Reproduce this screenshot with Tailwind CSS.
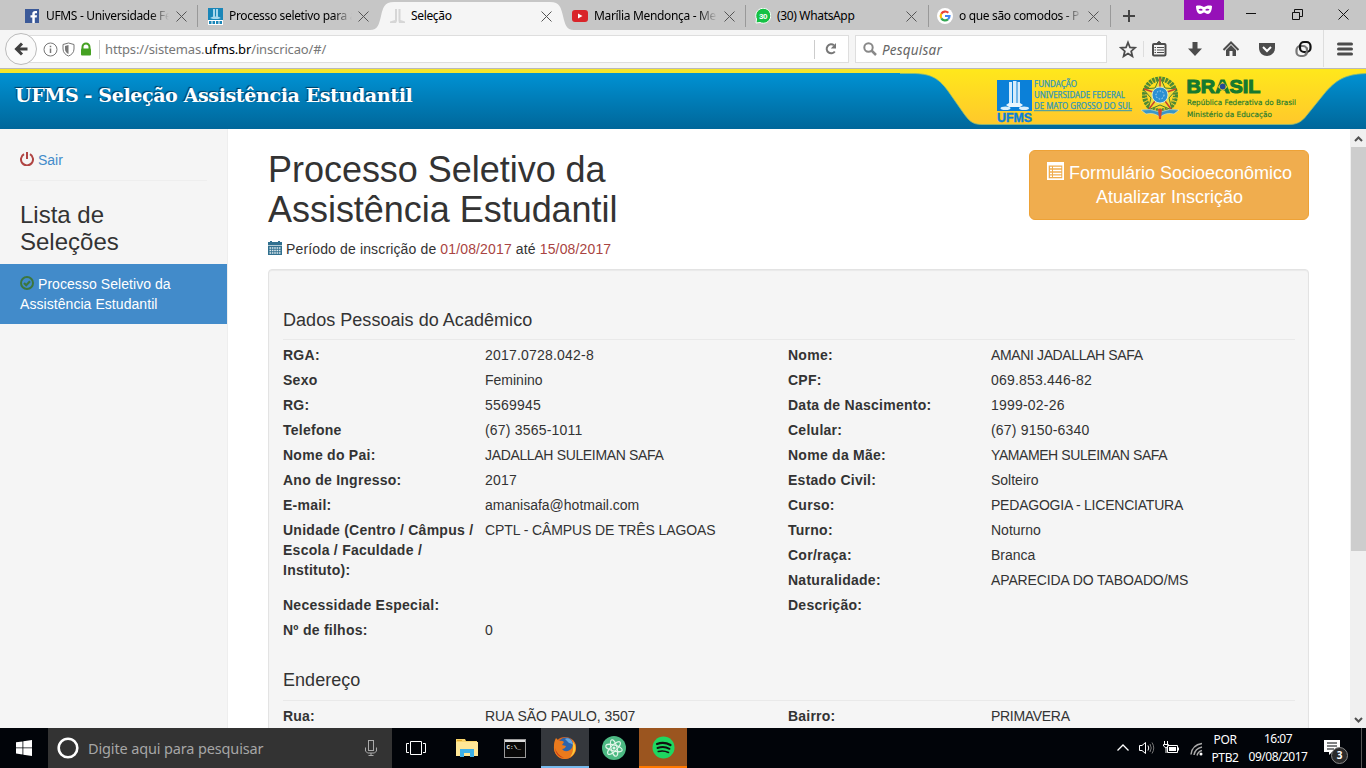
<!DOCTYPE html>
<html lang="pt-BR">
<head>
<meta charset="utf-8">
<title>Seleção</title>
<script src="https://cdn.jsdelivr.net/npm/@tailwindcss/browser@4"></script>
</head>
<body class="w-[1366px] h-[768px] overflow-hidden flex flex-col bg-white font-['Liberation_Sans',sans-serif] text-[14px] leading-5 text-[#333]">

<!-- Tab strip -->
<div class="relative h-[30px] shrink-0 bg-[#c6c6c6] flex pl-[14px] font-['Noto_Sans',sans-serif] text-[12px] tracking-[-0.34px] text-black">
  <svg class="absolute left-[370px] top-0" width="204" height="30"><path d="M0 30C8 30 9 24 11 16C13 8 14 2 24 2H180C190 2 191 8 193 16C195 24 196 30 204 30Z" fill="#f5f5f5"/></svg>
  <div class="relative w-[183px] flex items-center pl-[11px] pt-[2px]">
    <svg class="shrink-0" width="14" height="14" viewBox="0 0 14 14"><rect width="14" height="14" fill="#3b5998"/><path d="M7.300 14V8.500H5.500V6.200H7.300V4.800C7.300 2.800 8.400 2 10.200 2H12V4.300H10.700C10 4.300 9.800 4.600 9.800 5.200V6.200H12L11.700 8.500H9.800V14Z" fill="#fff"/></svg>
    <span class="ml-[7px] w-[123px] whitespace-nowrap mask-r-from-85%">UFMS - Universidade Fe</span>
    <svg class="ml-[7px] shrink-0" width="11" height="11"><path d="M.5 .5L10.500 10.500M10.500 .5L.5 10.500" stroke="#555"/></svg>
  </div>
  <div class="relative w-[183px] flex items-center pl-[11px] pt-[2px]">
    <i class="absolute left-0 top-[5px] w-px h-[22px] bg-[#999]"></i>
    <svg class="shrink-0" width="15" height="17" viewBox="0 0 15 17"><rect width="15" height="17" fill="#fff"/><rect y="0" width="15" height="12" fill="#1a86b8"/><path d="M5 1H7V10H5ZM8 1H10V10H8ZM2 10L5 8.500H10L13 10L10 11H5Z" fill="#a9d7ec"/><path d="M1 14.500H14" stroke="#1a86b8" stroke-width="3" stroke-dasharray="2.500 1"/></svg>
    <span class="ml-[6px] w-[123px] whitespace-nowrap mask-r-from-85%">Processo seletivo para a</span>
    <svg class="ml-[6px] shrink-0" width="11" height="11"><path d="M.5 .5L10.500 10.500M10.500 .5L.5 10.500" stroke="#555"/></svg>
  </div>
  <div class="relative w-[183px] flex items-center pl-[10px] pt-[2px]">
    <svg class="shrink-0" width="15" height="16" viewBox="0 0 15 16"><path d="M5 1H7V13L6 15H0V13.500L5 12ZM8.500 1H10.500V12L15 13.500V15H9L8.500 13Z" fill="#d6d6d6"/></svg>
    <span class="ml-[6px] w-[124px]">Seleção</span>
    <svg class="ml-[6px] shrink-0" width="11" height="11"><path d="M.5 .5L10.500 10.500M10.500 .5L.5 10.500" stroke="#555"/></svg>
  </div>
  <div class="relative w-[182px] flex items-center pl-[9px] pt-[2px]">
    <svg class="shrink-0" width="16" height="12"><rect width="16" height="12" rx="3" fill="#d9252a"/><path d="M6 3.500L10.500 6L6 8.500Z" fill="#fff"/></svg>
    <span class="ml-[6px] w-[123px] whitespace-nowrap mask-r-from-85%">Marília Mendonça - Me</span>
    <svg class="ml-[7px] shrink-0" width="11" height="11"><path d="M.5 .5L10.500 10.500M10.500 .5L.5 10.500" stroke="#555"/></svg>
  </div>
  <div class="relative w-[183px] flex items-center pl-[10px] pt-[2px]">
    <i class="absolute left-0 top-[5px] w-px h-[22px] bg-[#999]"></i>
    <svg class="shrink-0" width="16" height="16"><path d="M1 15L1.500 11A7.500 7.500 0 1 1 5 14.500Z" fill="#15c144" stroke="#fff"/><text x="8" y="10.700" text-anchor="middle" font-family="Liberation Sans" font-weight="bold" font-size="8" fill="#fff">30</text></svg>
    <span class="ml-[6px] w-[123px]">(30) WhatsApp</span>
    <svg class="ml-[6px] shrink-0" width="11" height="11"><path d="M.5 .5L10.500 10.500M10.500 .5L.5 10.500" stroke="#555"/></svg>
  </div>
  <div class="relative w-[183px] flex items-center pl-[9px] pt-[2px]">
    <i class="absolute left-0 top-[5px] w-px h-[22px] bg-[#999]"></i>
    <svg class="shrink-0" width="16" height="16" fill="none" stroke-width="2.200"><circle cx="8" cy="8" r="8" fill="#fff"/><path d="M4.300 5.700A4.500 4.500 0 0 1 11.300 4.800" stroke="#ea4335"/><path d="M4.300 5.700A4.500 4.500 0 0 0 4.300 10.300" stroke="#fbbc05"/><path d="M4.300 10.300A4.500 4.500 0 0 0 11 11.300" stroke="#34a853"/><path d="M11 11.300A4.500 4.500 0 0 0 12.500 8H8" stroke="#4285f4"/></svg>
    <span class="ml-[6px] w-[123px] whitespace-nowrap mask-r-from-85%">o que são comodos - P</span>
    <svg class="ml-[6px] shrink-0" width="11" height="11"><path d="M.5 .5L10.500 10.500M10.500 .5L.5 10.500" stroke="#555"/></svg>
    <i class="absolute right-0 top-[5px] w-px h-[22px] bg-[#999]"></i>
  </div>
  <svg class="ml-[12px] mt-[10px]" width="12" height="12"><path d="M6 0V12M0 6H12" stroke="#444" stroke-width="2"/></svg>
  <div class="ml-[49px] w-[40px] h-[20px] bg-[#9611b8] flex items-center justify-center">
    <svg width="16" height="10" viewBox="0 0 16 10"><path fill="#fff" fill-rule="evenodd" d="M0 1C3 0 6 1 8 2C10 1 13 0 16 1C16 5 14.500 9 12 9C10 9 9 7.500 8 7.500C7 7.500 6 9 4 9C1.500 9 0 5 0 1ZM2.500 4.500C3.500 6 6 6 6.800 5C6 3.500 3.500 3.300 2.500 4.500ZM13.500 4.500C12.500 6 10 6 9.200 5C10 3.500 12.500 3.300 13.500 4.500Z"/></svg>
  </div>
  <svg class="ml-[21px] mt-[8px]" width="104" height="12" fill="none" stroke="#111"><path d="M1 5.500H11M47.500 4.500H54.500V11.500H47.500ZM49.500 4V1.500H57.500V8.500H55M93.500 1.500L103.500 11.500M103.500 1.500L93.500 11.500"/></svg>
</div>

<!-- Navigation toolbar -->
<div class="h-[39px] shrink-0 bg-[#f5f5f5] border-b border-[#b9b9b9] flex items-center pl-[5px] font-['Noto_Sans',sans-serif]">
  <div class="z-10 w-[32px] h-[32px] rounded-full border border-[#bbb] bg-[#fafafa] flex items-center justify-center">
    <svg width="14" height="14" fill="none" stroke="#404040" stroke-width="3"><path d="M13.500 7H3M8 1.500L2.500 7L8 12.500"/></svg>
  </div>
  <div class="-ml-[14px] w-[826px] h-[28px] bg-white border border-[#dedede] flex items-center pl-[19px]">
    <svg width="50" height="15" viewBox="0 0 50 15"><circle cx="7.500" cy="7.500" r="6.500" fill="none" stroke="#777"/><path d="M7.500 6.500V11M7.500 3.800V5.300" stroke="#777" stroke-width="1.500"/><path d="M25.500 1L31 2.500V7C31 11 28 13 25.500 14C23 13 20 11 20 7V2.500Z" fill="#fff" stroke="#777"/><path d="M25.500 3V12C23.500 11 22 9.500 22 7V4Z" fill="#777"/><path d="M39.500 7V5A3.500 3.500 0 0 1 46.500 5V7" fill="none" stroke="#45a122" stroke-width="2"/><rect x="38" y="6.500" width="10" height="7" rx="1" fill="#45a122"/></svg>
    <i class="ml-[6px] w-px h-[19px] bg-[#d0d0d0]"></i>
    <span class="ml-[5px] w-[709px] text-[13px] text-[#777] tracking-[-0.14px]">https://sistemas.<span class="text-black">ufms.br</span>/inscricao/#/</span>
    <i class="w-px h-[19px] bg-[#ccc]"></i>
    <svg class="ml-[9px]" width="14" height="14"><path d="M10.800 9.500A4.500 4.500 0 1 1 10 3.300" fill="none" stroke="#777" stroke-width="2"/><path d="M12 1V6.500H6.800Z" fill="#777"/></svg>
  </div>
  <div class="ml-[6px] w-[252px] h-[28px] bg-white border border-[#dedede] flex items-center pl-[7px]">
    <svg width="14" height="14" fill="none" stroke="#888"><circle cx="5.500" cy="5.500" r="4.200" stroke-width="2"/><path d="M8.500 8.500L13 13" stroke-width="2.500"/></svg>
    <span class="ml-[5px] pt-[2px] italic text-[13.500px] tracking-[0.200px] text-[#666]">Pesquisar</span>
  </div>
  <svg class="ml-[12px]" width="247" height="39" viewBox="0 0 247 39" fill="none" stroke="#4c4c4c">
    <path d="M9 12.500L11 17.500L16 17.800L12.200 21.200L13.400 26.300L9 23.500L4.600 26.300L5.800 21.200L2 17.800L7 17.500Z" stroke-width="1.800"/>
    <path d="M24.500 11V27M204.500 0V37" stroke="#ddd"/>
    <rect x="34" y="14" width="12.500" height="11.500" rx="1" stroke-width="2"/><path d="M37 14L40 11.300L43 14Z" fill="#4c4c4c"/><path d="M38 17.500H45M38 20H45M38 22.500H45" stroke-width="1.200"/><path d="M35.500 17.500H37M35.500 20H37M35.500 22.500H37"/>
    <path d="M73.500 12H78.500V18.500H83L76 26L69 18.500H73.500Z" fill="#4c4c4c" stroke="none"/>
    <path d="M104.500 20L112 12.500L119.500 20" stroke-width="2"/><path d="M107 20L112 15L117 20V26H113.500V21H110.500V26H107Z" fill="#4c4c4c" stroke="none"/>
    <path d="M140 13H156V18C156 23 152 26 148 26C144 26 140 23 140 18Z" fill="#4c4c4c" stroke="none"/><path d="M144 17L148 21L152 17" stroke="#fff" stroke-width="2"/>
    <rect x="177.500" y="16" width="10.500" height="10" rx="4" stroke="#777" stroke-width="2.200"/><rect x="181" y="12" width="10.500" height="10" rx="4" stroke="#111" stroke-width="2.200"/><path d="M188 17.500V20Q188 23 186 25" stroke="#777" stroke-width="2"/>
    <path d="M219.500 14H232.500M219.500 19H232.500M219.500 24H232.500" stroke-width="3" stroke-linecap="round"/>
  </svg>
</div>

<!-- Site banner -->
<header class="relative h-[60px] shrink-0 overflow-hidden bg-linear-to-b from-[#0095d8] to-[#00679a]">
  <i class="absolute inset-x-0 top-0 h-[4px] bg-[#f4e52c]"></i>
  <h1 class="pl-[15px] pt-[12px] font-['DejaVu_Serif',serif] font-bold text-[19px] leading-[28px] text-white tracking-[-0.37px] whitespace-nowrap [text-shadow:-1px_-1px_1px_#013a5c]">UFMS - Seleção Assistência Estudantil</h1>
  <svg class="absolute right-0 top-0" width="466" height="60" viewBox="0 0 466 60">
    <defs><linearGradient id="y" x2="0" y2="1"><stop offset="0" stop-color="#ffe91b"/><stop offset="1" stop-color="#ffc82b"/></linearGradient>
    <linearGradient id="f"><stop offset="0" stop-color="#f4e52c"/><stop offset="1" stop-color="#f4e52c" stop-opacity="0"/></linearGradient></defs>
    <path d="M-4 -2H470V4.500C445 4.500 436 11 424 25L407 46C401 54 396 55.500 388 55.500H82C72 55.500 69 52 62 42L48 22C38 8 29 4.500 12 4.500H-4Z" fill="url(#y)" stroke="#8dbb78" stroke-width=".8"/>
    <rect width="30" height="4" fill="url(#f)"/>
    <rect x="97" y="11" width="35" height="31" fill="#0b80d8"/>
    <path d="M109 13H112V38H109ZM113 12H116.500V38H113ZM117.500 13H120V38H117.500Z" fill="#d5ecfb"/><ellipse cx="105.500" cy="39.300" rx="5" ry="1.800" fill="#d9effb"/><ellipse cx="124" cy="39.300" rx="5" ry="1.800" fill="#d9effb"/><path d="M106 36L109 34H120L123 36L120 38H109Z" fill="#eaf6fd"/>
    <g font-family="Liberation Sans" font-weight="bold">
      <text x="97" y="52.500" font-size="12.500" fill="#0b80d8" stroke="#0b80d8" stroke-width=".4" textLength="35" lengthAdjust="spacingAndGlyphs">UFMS</text>
    </g>
    <g font-family="Noto Sans" font-size="8" fill="#3298b8" stroke="#3298b8" stroke-width=".25">
      <text x="134" y="18" textLength="43" lengthAdjust="spacingAndGlyphs">FUNDAÇÃO</text>
      <text x="134" y="29" textLength="91" lengthAdjust="spacingAndGlyphs">UNIVERSIDADE FEDERAL</text>
      <text x="134" y="40" textLength="98" lengthAdjust="spacingAndGlyphs">DE MATO GROSSO DO SUL</text>
      <path d="M134 41.700H232" stroke-width="1"/>
    </g>
    <g>
      <ellipse cx="260" cy="26" rx="15.500" ry="16" fill="none" stroke="#4b8a35" stroke-width="5" stroke-dasharray="2.500 .8"/>
      <ellipse cx="260" cy="26" rx="14" ry="15" fill="none" stroke="#c8b73a" stroke-width="2" stroke-dasharray="1 2"/>
      <path d="M260 8L265 19L277 20L269 29L272 41L260 36L248 41L251 29L243 20L255 19Z" fill="#f3dc37" stroke="#477f30"/>
      <path d="M260 9V18M276 20L267 23M271 40L265 32M249 40L255 32M244 20L253 23" stroke="#c8432d" stroke-width="1.500"/>
      <circle cx="260" cy="26" r="8" fill="#2a8fd3" stroke="#dfe6c0"/><circle cx="260" cy="26" r="4" fill="none" stroke="#b9e1f6" stroke-dasharray="1.500 1.500"/>
      <path d="M241 41Q250 39 260 43Q270 39 279 41L274 45Q266 43 260 48Q254 43 246 45Z" fill="#3996c8" stroke="#e8e8c0" stroke-width=".6"/>
      <path d="M258 40H262L261 50H259Z" fill="#d6452c"/>
    </g>
    <text x="286.500" y="23.500" font-family="Liberation Sans" font-weight="bold" font-size="19" fill="#16792e" stroke="#16792e" stroke-width="1.100" textLength="74" lengthAdjust="spacingAndGlyphs">BRASIL</text>
    <path d="M318 18L322.500 12.500L327.500 18L322.500 22.500Z" fill="#f2cf2a"/><circle cx="322.700" cy="17.500" r="2.900" fill="#244a94"/>
    <g font-family="DejaVu Sans" font-size="7.500" fill="#1c7a30" stroke="#1c7a30" stroke-width=".15">
      <text x="287" y="36" textLength="109" lengthAdjust="spacingAndGlyphs">República Federativa do Brasil</text>
      <text x="287" y="47.500" textLength="85" lengthAdjust="spacingAndGlyphs">Ministério da Educação</text>
    </g>
  </svg>
</header>

<!-- Page -->
<div class="h-[599px] shrink-0 flex overflow-hidden">
  <aside class="w-[228px] shrink-0 bg-[#f5f5f5] border-r border-[#eee]">
    <div class="mx-[20px] mt-[21px] pb-[10px] border-b border-[#eee] flex">
      <svg class="mt-[2px]" width="14" height="14" viewBox="0 0 14 14" fill="none" stroke="#b04442" stroke-width="2"><path d="M4 2.200A6 6 0 1 0 10 2.200M7 0V7"/></svg>
      <a class="ml-[4px] text-[#428bca]">Sair</a>
    </div>
    <h3 class="mx-[20px] mt-[20px] text-[24px] leading-[27px]">Lista de<br>Seleções</h3>
    <a class="mt-[9px] h-[60px] w-[227px] bg-[#428bca] text-white px-[20px] py-[10px] block tracking-[0.06px]"><svg class="inline-block align-[-1px] mr-[4px]" width="14" height="14" viewBox="0 0 14 14" fill="none" stroke="#3c763d" stroke-width="2"><circle cx="7" cy="7" r="6"/><path d="M4 7L6.200 9.200L10 5.200" stroke-width="2.200"/></svg>Processo Seletivo da<br>Assistência Estudantil</a>
  </aside>

  <main class="grow pl-[40px] pr-[41px] pt-[21px]">
    <div class="flex justify-between">
      <h1 class="h-[79px] text-[36px] leading-[40px] -tracking-[0.03px]">Processo Seletivo da<br>Assistência Estudantil</h1>
      <a class="w-[280px] h-[70px] rounded-[6px] bg-[#f0ad4e] border border-[#eea236] text-white text-[18px] leading-[24px] text-center pt-[10px] pl-px whitespace-nowrap"><svg class="inline-block align-[-1px] mr-[5px]" width="17" height="18" viewBox="0 0 17 18"><path d="M0 0H17V18H0Z" fill="#fff"/><path d="M1.700 3.500H15.300V16.300H1.700Z" fill="#f0ad4e"/><path d="M3 5.500H5M3 8.500H5M3 11.500H5M3 14.200H5M6 5.500H14.300M6 8.500H14.300M6 11.500H14.300M6 14.200H14.300" stroke="#fff" stroke-width="1.500"/></svg>Formulário Socioeconômico<br>Atualizar Inscrição</a>
    </div>
    <p class="mt-[10px] flex whitespace-pre tracking-[0.14px]"><svg class="mt-[2px] mr-[4px]" width="14" height="14" viewBox="0 0 14 14"><path d="M0 1H2V0H4V1H10V0H12V1H14V5H0Z" fill="#31708f"/><path d="M0 4H14V14H0Z" fill="#31708f"/><path d="M0 4.500H14" stroke="#b5ccd6"/><path d="M1.500 7H12.500M1.500 9.500H12.500M1.500 12H12.500" stroke="#e1ebef" stroke-width="1.500" stroke-dasharray="1.600 .75"/></svg>Período de inscrição de <span class="text-[#a94442]">01/08/2017</span> até <span class="text-[#a94442]">15/08/2017</span></p>
    <section class="mt-[10px] w-[1041px] h-[520px] rounded-[4px] bg-[#f5f5f5] border border-[#e3e3e3] shadow-[inset_0_1px_1px_rgba(0,0,0,.05)] pl-[14px] pr-[13px] pt-[40px]">
      <h4 class="h-[30px] text-[18px] leading-[20px] border-b border-[#e9e9e9] tracking-[0.04px]">Dados Pessoais do Acadêmico</h4>
      <div class="mt-[5px] flex [&_dt]:font-bold [&_dt]:tracking-[0.26px] [&_dt]:mb-[5px] [&_dt]:min-h-5 [&_dl]:grid [&_dl]:grid-cols-[202px_1fr] [&_dl]:content-start">
        <dl class="w-[505px] shrink-0">
          <dt>RGA:</dt><dd class="tracking-[0.2px]">2017.0728.042-8</dd>
          <dt>Sexo</dt><dd>Feminino</dd>
          <dt>RG:</dt><dd class="tracking-[0.2px]">5569945</dd>
          <dt>Telefone</dt><dd class="tracking-[0.2px]">(67) 3565-1011</dd>
          <dt>Nome do Pai:</dt><dd class="-tracking-[0.34px]">JADALLAH SULEIMAN SAFA</dd>
          <dt>Ano de Ingresso:</dt><dd class="tracking-[0.2px]">2017</dd>
          <dt>E-mail:</dt><dd>amanisafa@hotmail.com</dd>
          <dt>Unidade (Centro / Câmpus /<br>Escola / Faculdade /<br>Instituto):</dt><dd class="-tracking-[0.1px]">CPTL - CÂMPUS DE TRÊS LAGOAS</dd>
        </dl>
        <dl class="grow [&>dd]:pl-px">
          <dt>Nome:</dt><dd class="-tracking-[0.37px]">AMANI JADALLAH SAFA</dd>
          <dt>CPF:</dt><dd class="tracking-[0.2px]">069.853.446-82</dd>
          <dt>Data de Nascimento:</dt><dd class="tracking-[0.2px]">1999-02-26</dd>
          <dt>Celular:</dt><dd class="tracking-[0.2px]">(67) 9150-6340</dd>
          <dt>Nome da Mãe:</dt><dd class="-tracking-[0.42px]">YAMAMEH SULEIMAN SAFA</dd>
          <dt>Estado Civil:</dt><dd>Solteiro</dd>
          <dt>Curso:</dt><dd class="-tracking-[0.22px]">PEDAGOGIA - LICENCIATURA</dd>
          <dt>Turno:</dt><dd>Noturno</dd>
          <dt>Cor/raça:</dt><dd>Branca</dd>
          <dt>Naturalidade:</dt><dd class="-tracking-[0.12px]">APARECIDA DO TABOADO/MS</dd>
        </dl>
      </div>
      <div class="grid grid-cols-[202px_303px_203px_1fr] auto-rows-[25px] [&>b]:tracking-[0.26px]">
        <b>Necessidade Especial:</b><span></span><b>Descrição:</b><span></span>
        <b>Nº de filhos:</b><span>0</span>
      </div>
      <h4 class="mt-[25px] h-[31px] text-[18px] leading-[20px] border-b border-[#e9e9e9] tracking-[0.04px]">Endereço</h4>
      <div class="mt-[5px] grid grid-cols-[202px_303px_203px_1fr] [&>b]:tracking-[0.2px]">
        <b>Rua:</b><span class="-tracking-[0.06px]">RUA SÃO PAULO, 3507</span><b>Bairro:</b><span class="-tracking-[0.3px]">PRIMAVERA</span>
      </div>
    </section>
  </main>

  <div class="w-[16px] shrink-0 bg-[#f0f0f0] flex flex-col items-center">
    <svg class="shrink-0" width="15" height="18"><path d="M4 12L7.500 8.500L11 12" fill="none" stroke="#505050" stroke-width="2"/></svg>
    <i class="w-[15px] h-[404px] bg-[#cdcdcd]"></i>
    <svg class="mt-auto shrink-0" width="15" height="18"><path d="M4 8L7.500 11.500L11 8" fill="none" stroke="#505050" stroke-width="2"/></svg>
  </div>
</div>

<!-- Taskbar -->
<footer class="h-[40px] shrink-0 bg-[#010409] flex font-['Noto_Sans',sans-serif] text-white">
  <div class="w-[48px] flex items-center justify-center"><svg width="16" height="16" viewBox="0 0 16 16" fill="#fff"><path d="M0 2.300L6.500 1.400V7.500H0ZM7.300 1.200L16 0V7.500H7.300ZM0 8.300H6.500V14.500L0 13.600ZM7.300 8.300H16V16L7.300 14.700Z"/></svg></div>
  <div class="w-[344px] bg-[#333] flex items-center pl-[9px]">
    <svg width="22" height="22"><circle cx="11" cy="11" r="9.300" fill="none" stroke="#fff" stroke-width="2.600"/></svg>
    <span class="ml-[9px] w-[277px] text-[14.500px] tracking-[-0.14px] text-[#a6a6a6]">Digite aqui para pesquisar</span>
    <svg width="12" height="16" fill="none" stroke="#aaa"><rect x="3.500" y=".5" width="5" height="10"/><path d="M.5 7.500V11L2.500 13H9.500L11.500 11V7.500M6 13V15.500M3.500 15.500H8.500"/></svg>
  </div>
  <div class="w-[48px] flex items-center justify-center"><svg width="20" height="14" fill="none" stroke="#fff"><path d="M4.500 .5H15.500V13.500H4.500ZM3 2.500H.5V11.500H3M17 2.500H19.500V11.500H17"/></svg></div>
  <div class="w-[53px] flex items-center justify-center"><svg width="22" height="18"><path d="M0 0H9L10 2H21V17H0Z" fill="#f9d56b"/><path d="M0 3H22V17H0Z" fill="#ffe796"/><path d="M1 1.500H6" stroke="#e3a92b"/><path d="M4 18V10H18V18H14V14H8V18Z" fill="#3eb1e8"/></svg></div>
  <div class="w-[48px] flex items-center pl-[11px]"><svg width="22" height="19"><rect x=".5" y=".5" width="21" height="18" fill="#080808" stroke="#9a9a9a"/><path d="M1 2H21" stroke="#ddd" stroke-width="2"/><text x="2.500" y="9.500" font-family="Liberation Mono" font-weight="bold" font-size="6" fill="#fff">C:\_</text></svg></div>
  <div class="w-[48px] bg-[#35383d] border-b-2 border-[#76b9ed] flex items-center justify-center pt-[1px]">
    <svg width="24" height="24"><circle cx="12" cy="12" r="11" fill="#e2661b"/><circle cx="13" cy="9.500" r="8" fill="#2d64ab"/><path d="M12 3C15 1 20 4 20 9C19 8 18 7 16 7Z" fill="#69a7df"/><path d="M1 9C1 6 2 4 3 2L6 5Q9 4 11 6L9 9L13 10Q12 13 9 13Q12 17 17 14Q20 12 20 7L18 3C22 5 23.500 9 23 13C22 19 17 23 12 23C5 23 0 17 1 9Z" fill="#ea7a1d"/><path d="M20 6C24 10 23 18 17 21C21 16 20 12 20 6Z" fill="#fbc93b"/><path d="M2 12Q4 19 11 22Q3 21 2 12Z" fill="#c53818"/></svg>
  </div>
  <div class="w-[50px] flex items-center justify-center"><svg width="24" height="24" fill="none" stroke="#e0f5e8" stroke-width="1.100"><circle cx="12" cy="12" r="12" fill="#4cb983" stroke="none"/><ellipse cx="12" cy="12" rx="3" ry="8.500" transform="rotate(-15 12 12)"/><ellipse cx="12" cy="12" rx="3" ry="8.500" transform="rotate(45 12 12)"/><ellipse cx="12" cy="12" rx="3" ry="8.500" transform="rotate(105 12 12)"/><circle cx="12" cy="12" r="1" fill="#fff"/></svg></div>
  <div class="w-[48px] bg-[#9b551f] border-b-2 border-[#ff7800] flex items-center justify-center pt-[1px]"><svg width="23" height="23" fill="none" stroke="#111" stroke-linecap="round"><circle cx="11.500" cy="11.500" r="11" fill="#1ed760" stroke="none"/><path d="M5 8Q12 5.500 18.500 9" stroke-width="2.200"/><path d="M5.500 12Q12 9.800 17.500 12.800" stroke-width="1.900"/><path d="M6.300 15.500Q11.500 14 16.500 16.500" stroke-width="1.600"/></svg></div>
  <svg class="ml-[429px] mt-[8px]" width="88" height="24" viewBox="0 0 88 24" fill="none" stroke="#fff">
    <path d="M1.500 14.500L7 9L12.500 14.500" stroke-width="1.300"/>
    <path d="M23.500 9.500H26L29.500 6.500V17.500L26 14.500H23.500Z"/><path d="M32 9.500Q33.500 12 32 14.500"/><path d="M34 8Q36.500 12 34 16M36 6.500Q39.500 12 36 17.500" stroke="#777"/>
    <path d="M51.500 9.500H61.500V16.500H51.500Z"/><path d="M53 11H60V15H53Z" fill="#fff" stroke="none"/><path d="M62.500 11.500V14.500M48.500 5V8M51.500 5V8M47.500 8.500H52.500V10L50 12L47.500 10ZM50 12V17"/>
    <path d="M75 18.500Q76 9 86 7.500M78 19Q79 12.500 86 11M81 19.500Q82 15.500 86 14.500" stroke="#aaa" stroke-width="1.500"/><circle cx="85" cy="18" r="1.500" fill="#fff" stroke="none"/>
  </svg>
  <div class="w-[30px] ml-[6px] pt-[3px] text-[12px] leading-[17.500px] text-center whitespace-nowrap flex flex-col items-center tracking-[-0.400px]"><span>POR</span><span>PTB2</span></div>
  <div class="w-[64px] ml-[6px] pt-[2px] text-[12px] leading-[17.500px] text-center whitespace-nowrap flex flex-col items-center tracking-[-0.500px]"><span>16:07</span><span>09/08/2017</span></div>
  <svg class="ml-[13px] mt-[11px]" width="28" height="28"><path d="M1 1H17V13H9L6 16V13H1Z" fill="#fff"/><path d="M4 4H14M4 7H14M4 10H11" stroke="#010409"/><circle cx="16.500" cy="16.500" r="8" fill="#2b2b2b" stroke="#888"/><text x="16.500" y="20" text-anchor="middle" font-family="Noto Sans" font-size="10" font-weight="bold" fill="#fff">3</text></svg>
  <i class="ml-auto mr-[4px] w-px bg-[#555]"></i>
</footer>
</body>
</html>
